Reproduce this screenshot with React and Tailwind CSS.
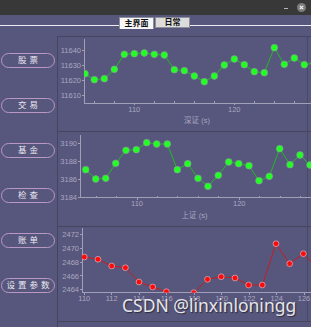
import { Fragment } from 'react'

const menu = ['股票', '交易', '基金', '检查', '账单', '设置参数']

const charts = [
  {
    top: 37,
    axisX: 84,
    axisTop: 39,
    baseY: 103,
    yTicks: [
      ['11640', 50],
      ['11630', 65],
      ['11620', 80],
      ['11610', 95],
    ],
    xTicks: [
      ['110', 134.3],
      ['120', 234.3],
    ],
    minor: [94.3, 114.3, 154.3, 174.3, 194.3, 214.3, 254.3, 274.3, 294.3],
    points: [
      [85, 73.7], [94.3, 79.7], [104.3, 78.7], [114.3, 69.3], [124.3, 54.3], [134.3, 53.7],
      [144.3, 53], [154.3, 54.3], [164.3, 55], [174.3, 69.7], [184.3, 70.7], [194.3, 76],
      [204.3, 81.7], [214.3, 76], [224.3, 65], [234.3, 59], [244.3, 64.7], [254.3, 71.7],
      [264.3, 72.7], [274.3, 47.7], [284.3, 64.3], [294.3, 58], [304.3, 64.7], [314.3, 63],
    ],
    dot: '#22ff22',
    ring: '#8d8ca6',
    line: '#1fc21f',
    r: 3.4,
    title: ['深证 (s)', 197, 122.5],
  },
  {
    top: 132,
    axisX: 80,
    axisTop: 135,
    baseY: 197.5,
    yTicks: [
      ['3190', 143.3],
      ['3188', 161.3],
      ['3186', 179.3],
      ['3184', 197.3],
    ],
    xTicks: [
      ['110', 137],
      ['120', 239.3],
    ],
    minor: [96.1, 116.5, 157.5, 177.9, 198.4, 218.8, 259.8, 280.2, 300.7],
    points: [
      [85.7, 169.7], [95.7, 179], [105.7, 178.3], [115.7, 163.3], [126, 150.3], [136.3, 149.7],
      [146.7, 142.7], [156.7, 144], [167.3, 144], [177.3, 169.7], [187.7, 163.7], [198, 178.3],
      [208, 186.3], [218.3, 175.3], [228.7, 162], [238.7, 163.7], [249, 165.7], [259, 180.7],
      [269.3, 176.3], [279.7, 148.7], [290, 164.7], [300, 155], [310, 165],
    ],
    dot: '#22ff22',
    ring: '#8d8ca6',
    line: '#1fc21f',
    r: 3.4,
    title: ['上证 (s)', 194.5, 217.5],
  },
  {
    top: 227,
    axisX: 82,
    axisTop: 228,
    baseY: 292.5,
    yTicks: [
      ['2472', 234.7],
      ['2470', 248.7],
      ['2468', 262.2],
      ['2466', 275.9],
      ['2464', 289.7],
    ],
    xTicks: [
      ['110', 84.3],
      ['112', 111.7],
      ['114', 139],
      ['116', 166.7],
      ['118', 194.3],
      ['120', 221.7],
      ['122', 249.3],
      ['124', 276.7],
      ['126', 304],
    ],
    minor: [],
    points: [
      [84.3, 257], [98, 259.3], [111.7, 266], [125.4, 267.7], [139, 282], [152.7, 287],
      [166.4, 291.7], [180, 298], [193.8, 292.7], [207.5, 279.3], [221.2, 276.7], [235, 278],
      [248.6, 285], [262.3, 285], [276, 243.7], [289.7, 263.7], [303.4, 253.7], [317.5, 268],
    ],
    dot: '#ff0a0a',
    ring: '#d6d3e0',
    line: '#d41616',
    r: 2.9,
    title: null,
  },
]

function Chart({ top, axisX, axisTop, baseY, yTicks, xTicks, minor, points, dot, ring, line, r, title }) {
  const d = points.map((p, i) => `${i ? 'L' : 'M'}${p[0]} ${p[1]}`).join(' ')
  const clipId = `plot-${top}`

  return (
    <div className="h-[95px] border-b border-[#46455f]">
      <svg width="253" height="94" viewBox={`58 ${top} 253 94`} className="block">
        <defs>
          <clipPath id={clipId}>
            <rect x={axisX} y={top} width={320 - axisX} height={baseY - top} />
          </clipPath>
        </defs>
        <line x1="307.5" y1={top} x2="307.5" y2={top + 94} stroke="#4a4967" />
        <g stroke="#a09fb8" strokeWidth="1" shapeRendering="crispEdges">
          <line x1={axisX + 0.5} y1={axisTop} x2={axisX + 0.5} y2={baseY} />
          <line x1={axisX} y1={baseY} x2="311" y2={baseY} />
          {yTicks.map(([, y]) => (
            <line key={y} x1={axisX - 2} y1={y} x2={axisX} y2={y} />
          ))}
          {xTicks.map(([, x]) => (
            <line key={x} x1={x} y1={baseY} x2={x} y2={baseY + 2} />
          ))}
          {minor.map((x) => (
            <line key={x} x1={x} y1={baseY - 2} x2={x} y2={baseY} />
          ))}
        </g>
        <g fill="#a9a8c0" fontSize="7.5" fontFamily="'Liberation Sans', 'Noto Sans CJK SC', sans-serif">
          {yTicks.map(([label, y]) => (
            <text key={label} x={axisX - 3} y={y + 2.7} textAnchor="end">
              {label}
            </text>
          ))}
          {xTicks.map(([label, x]) => (
            <text key={label} x={x} y={baseY + 8.5} textAnchor="middle">
              {label}
            </text>
          ))}
          {title && (
            <text x={title[1]} y={title[2]} textAnchor="middle">
              {title[0]}
            </text>
          )}
        </g>
        <g clipPath={`url(#${clipId})`}>
          <path d={d} fill="none" stroke={line} strokeWidth="0.9" />
          {points.map(([x, y]) => (
            <circle key={x} cx={x} cy={y} r={r} fill={dot} stroke={ring} strokeWidth="0.6" />
          ))}
        </g>
      </svg>
    </div>
  )
}

function TitleBar() {
  return (
    <div className="flex h-[15px] shrink-0 items-center justify-end gap-[9px] bg-[#383838] pr-[5px]">
      <div className="mt-[2px] h-px w-[4px] bg-[#b5b5b5]" />
      <svg width="9" height="9" viewBox="0 0 9 9" className="block">
        <circle cx="4.5" cy="4.5" r="4.5" fill="#7d7d7d" />
        <path d="M2.8 2.8 L6.2 6.2 M6.2 2.8 L2.8 6.2" stroke="#f2f2f2" strokeWidth="1.2" />
      </svg>
    </div>
  )
}

function Tabs() {
  return (
    <div className="flex h-[21px] shrink-0 items-start">
      <div className="h-[11px] w-[119px] border-b border-[#ecebf4]" />
      <div className="mt-[2px] flex h-[12px] w-[35px] items-center justify-center border border-b-0 border-[#8f8f9a] bg-[#f7f7f7] text-[8px] font-bold leading-none text-[#111]">
        主界面
      </div>
      <div className="ml-px mt-[2px] flex h-[11px] w-[35px] items-center justify-center border border-[#8f8f9a] bg-[#dcdcdc] text-[8px] font-bold leading-none text-[#111]">
        日常
      </div>
      <div className="h-[11px] flex-1 border-b border-[#ecebf4]" />
    </div>
  )
}

function SideMenu() {
  return (
    <div className="flex w-[57px] shrink-0 flex-col gap-[30px] pt-[17px]">
      {menu.map((item) => (
        <button
          key={item}
          type="button"
          className="ml-px flex h-[15px] w-[54px] items-center justify-center rounded-full border border-[#b998c4] pl-[3px] text-[8.5px] leading-none tracking-[3px] text-[#ebe9f2]"
        >
          {item}
        </button>
      ))}
    </div>
  )
}

export default function App() {
  return (
    <div className="relative flex h-[327px] w-[311px] flex-col overflow-hidden bg-[#57567c] font-['Liberation_Sans','Noto_Sans_CJK_SC',sans-serif]">
      <TitleBar />
      <Tabs />
      <div className="flex flex-1">
        <SideMenu />
        <div className="flex flex-1 flex-col border-l border-t border-[#46455f]">
          {charts.map((chart) => (
            <Fragment key={chart.top}>
              <Chart {...chart} />
            </Fragment>
          ))}
        </div>
      </div>
      <div className="absolute left-[122px] top-[297px] whitespace-nowrap font-['Noto_Sans',sans-serif] text-[17.5px] leading-none text-[#e6e6ea] [text-shadow:1px_1px_1px_rgba(30,30,40,0.75)]">
        CSDN @linxinloningg
      </div>
    </div>
  )
}
